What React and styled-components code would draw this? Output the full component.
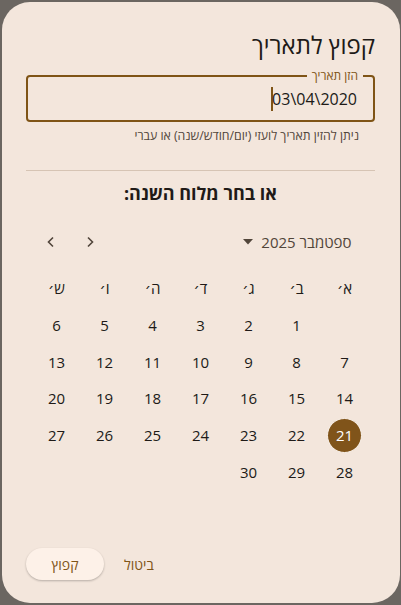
import React from "react";
import styled, { createGlobalStyle } from "styled-components";

const GlobalStyle = createGlobalStyle`
  html, body {
    margin: 0;
    padding: 0;
    background: #6b6661;
    font-family: "Open Sans", "DejaVu Sans", sans-serif;
  }
  #root {
    padding: 2px 1px 2px 2px;
  }
`;

const Dialog = styled.div`
  direction: rtl;
  box-sizing: border-box;
  width: 398px;
  height: 601px;
  border-radius: 28px;
  background: #f3e6dc;
  padding: 27px 25px 23px 24px;
  display: flex;
  flex-direction: column;
  color: #201a17;
`;

const Title = styled.h1`
  margin: 0;
  font-size: 24px;
  line-height: 32px;
  font-weight: 400;
  color: #201a17;
`;

const Field = styled.div`
  position: relative;
  margin-top: 14px;
  height: 47px;
  box-sizing: border-box;
  border: 2px solid #7f5416;
  border-radius: 4px;
  display: flex;
  align-items: center;
  padding: 0 16px;
`;

const FieldLabel = styled.span`
  position: absolute;
  top: -9px;
  right: 10px;
  padding: 0 5px;
  background: #f3e6dc;
  font-size: 12px;
  line-height: 16px;
  color: #7f5416;
`;

const Value = styled.span`
  direction: ltr;
  display: inline-flex;
  align-items: center;
  font-size: 16px;
  color: #201a17;
`;

const Caret = styled.span`
  display: inline-block;
  width: 2px;
  height: 24px;
  background: #7f5416;
  margin-right: -1px;
`;

const Helper = styled.div`
  margin-top: 6px;
  padding-right: 16px;
  font-size: 12.3px;
  line-height: 16px;
  color: #51453a;
`;

const Divider = styled.hr`
  margin: 26px 0 0;
  border: 0;
  height: 1px;
  background: #d6c4b4;
`;

const Heading = styled.h2`
  margin: 10px 0 0;
  text-align: center;
  font-size: 18px;
  line-height: 24px;
  font-weight: 700;
`;

const Calendar = styled.div`
  width: 336px;
  align-self: center;
  margin-top: 17px;
`;

const MonthBar = styled.div`
  display: flex;
  align-items: center;
  justify-content: space-between;
  height: 40px;
  padding-right: 17px;
`;

const MonthSelect = styled.div`
  display: flex;
  align-items: center;
  gap: 8px;
  font-size: 15px;
  color: #51453a;
`;

const Nav = styled.div`
  display: flex;
  gap: 3px;
`;

const NavButton = styled.button`
  width: 36px;
  height: 36px;
  border: 0;
  padding: 0;
  background: transparent;
  display: flex;
  align-items: center;
  justify-content: center;
  color: #51453a;
`;

const Grid = styled.div`
  margin-top: 8px;
  display: grid;
  grid-template-columns: repeat(7, 48px);
  grid-auto-rows: 36.7px;
`;

const WeekDay = styled.div`
  display: flex;
  align-items: center;
  justify-content: center;
  font-size: 15px;
  color: #201a17;
`;

const Day = styled.div`
  display: flex;
  align-items: center;
  justify-content: center;
  font-size: 15px;
  color: #201a17;
`;

const DayCircle = styled.span`
  width: 35px;
  height: 35px;
  box-sizing: border-box;
  border-radius: 50%;
  display: flex;
  align-items: center;
  justify-content: center;
  background: ${(p) => (p.selected ? "#80541a" : "transparent")};
  border: 1px solid ${(p) => (p.selected ? "#fbf3ec" : "transparent")};
  color: ${(p) => (p.selected ? "#ffffff" : "inherit")};
`;

const Actions = styled.div`
  margin-top: auto;
  display: flex;
  justify-content: flex-end;
  align-items: center;
  gap: 8px;
`;

const TextButton = styled.button`
  height: 32px;
  border: 0;
  border-radius: 16px;
  padding: 0 12px;
  font-family: inherit;
  font-size: 14px;
  font-weight: 500;
  color: #7f5416;
  background: transparent;
`;

const FilledButton = styled(TextButton)`
  width: 78px;
  background: #fdf1e8;
  box-shadow: 0 1px 2px rgba(0, 0, 0, 0.18), 0 1px 3px rgba(0, 0, 0, 0.08);
`;

const weekDays = ["א׳", "ב׳", "ג׳", "ד׳", "ה׳", "ו׳", "ש׳"];

function Chevron({ dir }) {
  return (
    <svg width="14" height="14" viewBox="0 0 14 14" fill="none">
      <path
        d={dir === "left" ? "M9 2.5 4.5 7 9 11.5" : "M5 2.5 9.5 7 5 11.5"}
        stroke="currentColor"
        strokeWidth="1.6"
      />
    </svg>
  );
}

export default function App() {
  const cells = [null];
  for (let d = 1; d <= 30; d++) cells.push(d);

  return (
    <>
      <GlobalStyle />
      <Dialog>
        <Title>קפוץ לתאריך</Title>
        <Field>
          <FieldLabel>הזן תאריך</FieldLabel>
          <Value>
            <Caret />
            03\04\2020
          </Value>
        </Field>
        <Helper>ניתן להזין תאריך לועזי (יום/חודש/שנה) או עברי</Helper>
        <Divider />
        <Heading>או בחר מלוח השנה:</Heading>
        <Calendar>
          <MonthBar>
            <MonthSelect>
              <span>ספטמבר 2025</span>
              <svg width="10" height="6" viewBox="0 0 10 6">
                <path d="M0 0h10L5 5.5z" fill="currentColor" />
              </svg>
            </MonthSelect>
            <Nav>
              <NavButton>
                <Chevron dir="right" />
              </NavButton>
              <NavButton>
                <Chevron dir="left" />
              </NavButton>
            </Nav>
          </MonthBar>
          <Grid>
            {weekDays.map((w) => (
              <WeekDay key={w}>{w}</WeekDay>
            ))}
            {cells.map((d, i) => (
              <Day key={i}>
                {d && <DayCircle selected={d === 21}>{d}</DayCircle>}
              </Day>
            ))}
          </Grid>
        </Calendar>
        <Actions>
          <TextButton>ביטול</TextButton>
          <FilledButton>קפוץ</FilledButton>
        </Actions>
      </Dialog>
    </>
  );
}
